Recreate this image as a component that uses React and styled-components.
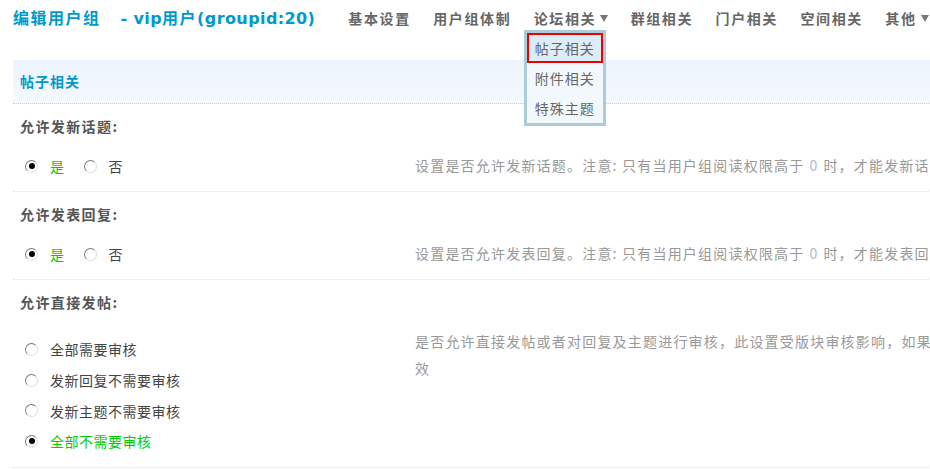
import React from "react";
import styled, { createGlobalStyle } from "styled-components";

const GlobalStyle = createGlobalStyle`
  html, body {
    margin: 0;
    padding: 0;
    background: #fff;
    overflow: hidden;
  }
  body {
    font-family: "Noto Sans CJK SC", "DejaVu Sans", sans-serif;
    font-size: 14px;
    color: #333;
  }
`;

const Page = styled.div`
  width: 1200px;
  padding-left: 13px;
`;

const TopBar = styled.div`
  display: flex;
  align-items: center;
  height: 36px;
`;

const Title = styled.h1`
  margin: 0;
  font-size: 16px;
  font-weight: bold;
  color: #0099cc;
  letter-spacing: 1.5px;
  line-height: 34px;
  white-space: nowrap;
`;

const Latin = styled.span`
  font-family: "DejaVu Sans", sans-serif;
  font-size: 16px;
  letter-spacing: 0.4px;
  margin-left: ${(p) => p.$gap || 0}px;
`;

const Nav = styled.ul`
  display: flex;
  margin: 0 0 0 33px;
  padding: 0;
  list-style: none;
  gap: 22.5px;
`;

const NavItem = styled.li`
  position: relative;
  display: flex;
  align-items: center;
  font-size: 14px;
  font-weight: bold;
  color: #666;
  letter-spacing: 1.6px;
  line-height: 36px;
  white-space: nowrap;
`;

const Arrow = styled.span`
  display: inline-block;
  width: 0;
  height: 0;
  margin-left: 4px;
  border-left: 4px solid transparent;
  border-right: 4px solid transparent;
  border-top: 7px solid #777;
`;

const Menu = styled.ul`
  position: absolute;
  top: 30px;
  left: -10px;
  z-index: 10;
  margin: 0;
  padding: 0;
  list-style: none;
  width: 76px;
  border: 3px solid #aacdd9;
  background: #f2f8fc;
`;

const MenuItem = styled.li`
  box-sizing: border-box;
  height: 30px;
  line-height: ${(p) => (p.$active ? "26px" : "30px")};
  text-align: center;
  font-size: 14px;
  font-weight: normal;
  letter-spacing: 1px;
  color: #666;
  border: ${(p) => (p.$active ? "2px solid #e00" : "none")};
  background: ${(p) => (p.$active ? "#dcecf8" : "transparent")};
`;

const SectionHead = styled.div`
  margin-top: 24px;
  height: 43px;
  line-height: 43px;
  padding-left: 7px;
  background: linear-gradient(#edf4fc, #f4f9fe);
  border-bottom: 1px dotted #ccd;
  font-weight: bold;
  color: #0099cc;
  letter-spacing: 1px;
`;

const Block = styled.div`
  border-bottom: 1px dotted #d8e4ee;
`;

const Label = styled.div`
  height: 44px;
  line-height: 44px;
  padding-left: 7px;
  font-weight: bold;
  color: #555;
  letter-spacing: 1.4px;
`;

const Colon = styled.span`
  color: #556;
`;

const OptionRow = styled.div`
  display: grid;
  grid-template-columns: 402px 755px;
  align-items: start;
  padding-bottom: ${(p) => p.$pb}px;
`;

const Choices = styled.ul`
  display: flex;
  flex-direction: ${(p) => (p.$stack ? "column" : "row")};
  gap: ${(p) => (p.$stack ? "0" : "19px")};
  margin: 0;
  padding: 10px 0 0 12px;
  list-style: none;
`;

const Choice = styled.li`
  display: flex;
  align-items: center;
  gap: 12px;
  height: ${(p) => (p.$stack ? "30.7px" : "16px")};
  color: ${(p) => (p.$checked ? "#00cc00" : "#444")};
  letter-spacing: 0.5px;
  white-space: nowrap;
`;

const Radio = styled.span`
  box-sizing: border-box;
  position: relative;
  flex: none;
  width: 13px;
  height: 13px;
  border-radius: 50%;
  border: 1px solid;
  border-color: #7a7a7a #dcdcdc #dcdcdc #7a7a7a;
  background: #fff;

  &::after {
    content: "";
    display: ${(p) => (p.$checked ? "block" : "none")};
    position: absolute;
    left: 2.5px;
    top: 2.5px;
    width: 6px;
    height: 6px;
    border-radius: 50%;
    background: #000;
  }
`;

const Tip = styled.div`
  padding-top: 4px;
  line-height: 27px;
  color: #999;
  letter-spacing: 1.2px;
`;

const Num = styled.span`
  color: #a9b9d4;
  margin: 0 5px;
`;

const menuItems = ["基本设置", "用户组体制", "论坛相关", "群组相关", "门户相关", "空间相关", "其他"];

const settings = [
  {
    label: "允许发新话题",
    stack: false,
    options: [
      { text: "是", checked: true },
      { text: "否" },
    ],
    tip: (
      <>
        设置是否允许发新话题。注意: 只有当用户组阅读权限高于<Num>0</Num>时，才能发新话题
      </>
    ),
  },
  {
    label: "允许发表回复",
    stack: false,
    options: [
      { text: "是", checked: true },
      { text: "否" },
    ],
    tip: (
      <>
        设置是否允许发表回复。注意: 只有当用户组阅读权限高于<Num>0</Num>时，才能发表回复
      </>
    ),
  },
  {
    label: "允许直接发帖",
    stack: true,
    options: [
      { text: "全部需要审核" },
      { text: "发新回复不需要审核" },
      { text: "发新主题不需要审核" },
      { text: "全部不需要审核", checked: true },
    ],
    tip: "是否允许直接发帖或者对回复及主题进行审核，此设置受版块审核影响，如果版块设置了需要审核，此处设置无效",
  },
];

export default function App() {
  return (
    <Page>
      <GlobalStyle />
      <TopBar>
        <Title>
          编辑用户组<Latin $gap={20}>- vip</Latin>用户<Latin>(groupid:20)</Latin>
        </Title>
        <Nav>
          {menuItems.map((m) => (
            <NavItem key={m}>
              {m}
              {(m === "论坛相关" || m === "其他") && <Arrow />}
              {m === "论坛相关" && (
                <Menu>
                  <MenuItem $active>帖子相关</MenuItem>
                  <MenuItem>附件相关</MenuItem>
                  <MenuItem>特殊主题</MenuItem>
                </Menu>
              )}
            </NavItem>
          ))}
        </Nav>
      </TopBar>

      <SectionHead>帖子相关</SectionHead>

      {settings.map((s) => (
        <Block key={s.label}>
          <Label>
            {s.label}
            <Colon>:</Colon>
          </Label>
          <OptionRow $pb={s.stack ? 10 : 12}>
            <Choices $stack={s.stack}>
              {s.options.map((o) => (
                <Choice key={o.text} $checked={o.checked} $stack={s.stack}>
                  <Radio $checked={o.checked} />
                  {o.text}
                </Choice>
              ))}
            </Choices>
            <Tip>{s.tip}</Tip>
          </OptionRow>
        </Block>
      ))}
    </Page>
  );
}
